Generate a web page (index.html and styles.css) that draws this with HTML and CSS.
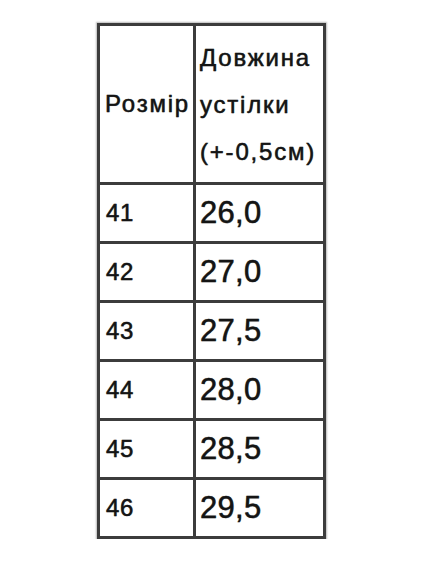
FILE: index.html
```html
<!DOCTYPE html>
<html lang="uk">
<head>
<meta charset="utf-8">
<link rel="stylesheet" href="styles.css">
</head>
<body>
<table class="sizes">
  <tr class="head">
    <td class="c1">Розмір</td>
    <td class="c2 htext">Довжина<br>устілки<br>(+-0,5см)</td>
  </tr>
  <tr><td class="c1 small">41</td><td class="c2 num">26,0</td></tr>
  <tr><td class="c1 small">42</td><td class="c2 num">27,0</td></tr>
  <tr><td class="c1 small">43</td><td class="c2 num">27,5</td></tr>
  <tr><td class="c1 small">44</td><td class="c2 num">28,0</td></tr>
  <tr><td class="c1 small">45</td><td class="c2 num">28,5</td></tr>
  <tr><td class="c1 small">46</td><td class="c2 num">29,5</td></tr>
</table>
</body>
</html>
```
FILE: styles.css
```css
html, body {
  margin: 0;
  padding: 0;
  background: #fff;
}
body {
  padding: 23px 0 0 97px;
  font-family: "Liberation Sans", Arial, sans-serif;
  color: #141414;
}
.sizes {
  border-collapse: collapse;
  border: 3px solid #3c3c3c;
  box-shadow: 0 0 1.5px 1px rgba(60,60,60,0.35);
}
.sizes td {
  border: 3px solid #3c3c3c;
  padding: 0;
  height: 56px;
  vertical-align: middle;
  font-size: 24px;
  letter-spacing: 1.8px;
  -webkit-text-stroke: 0.35px #141414;
  text-shadow: 0 0 0.8px rgba(20,20,20,0.6);
}
.sizes .head td {
  height: 156px;
}
.c1 {
  width: 87px;
  padding-left: 5px !important;
}
.c2 {
  width: 123px;
  padding-left: 4px !important;
}
.htext {
  line-height: 47px;
}
.sizes .small {
  font-size: 24px;
  letter-spacing: 0.6px;
  padding-left: 6px !important;
}
.num {
  font-size: 31px !important;
  letter-spacing: 0.3px !important;
}
```
